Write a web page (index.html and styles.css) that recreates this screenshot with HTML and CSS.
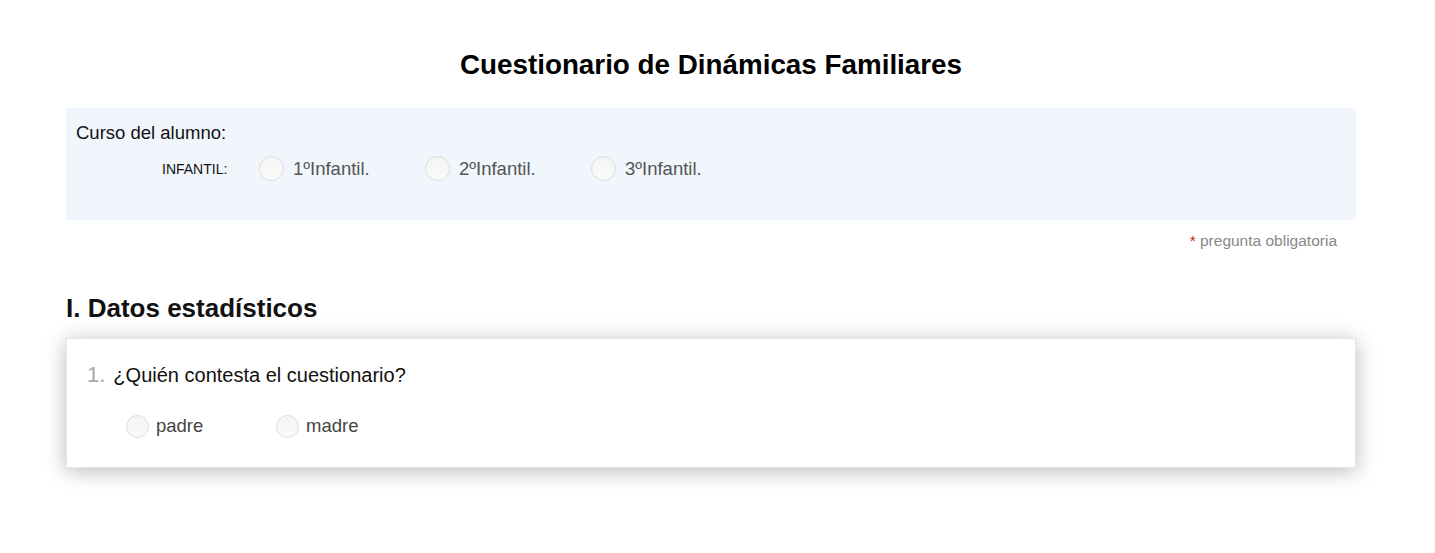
FILE: index.html
```html
<!DOCTYPE html>
<html lang="es">
<head>
<meta charset="utf-8">
<title>Cuestionario de Dinámicas Familiares</title>
<link rel="stylesheet" href="styles.css">
</head>
<body>
<div class="page">
  <h1 class="title">Cuestionario de Dinámicas Familiares</h1>
  <div class="course">
    <div class="course-label">Curso del alumno:</div>
    <div class="course-row">
      <span class="level">INFANTIL:</span>
      <label class="opt"><span class="radio"></span><span>1ºInfantil.</span></label>
      <label class="opt"><span class="radio"></span><span>2ºInfantil.</span></label>
      <label class="opt"><span class="radio"></span><span>3ºInfantil.</span></label>
    </div>
  </div>
  <div class="required"><span class="ast">*</span> pregunta obligatoria</div>
  <h2 class="section">I. Datos estadísticos</h2>
  <div class="card">
    <div class="question"><span class="num">1.</span><span class="qtext">¿Quién contesta el cuestionario?</span></div>
    <div class="answers">
      <label class="ans"><span class="radio small"></span><span>padre</span></label>
      <label class="ans"><span class="radio small"></span><span>madre</span></label>
    </div>
  </div>
</div>
</body>
</html>
```
FILE: styles.css
```css
* { box-sizing: border-box; }
body {
  margin: 0;
  background: #fff;
  font-family: "Liberation Sans", Arial, sans-serif;
  color: #111;
}
.page {
  width: 1290px;
  margin: 0 0 0 66px;
  padding: 49px 0 60px 0;
}
.title {
  margin: 0;
  text-align: center;
  font-size: 27.8px;
  font-weight: bold;
  line-height: 32px;
  color: #000;
}
.course {
  margin-top: 27px;
  height: 112px;
  background: #f1f6fd;
  padding: 14px 10px 0 10px;
}
.course-label {
  font-size: 18.5px;
  line-height: 22px;
  color: #111;
}
.course-row {
  display: flex;
  align-items: center;
  margin-top: 11px;
  height: 27px;
}
.level {
  font-size: 14px;
  margin-left: 86px;
  width: 97px;
  color: #111;
  padding-top: 1px;
}
.opt {
  display: flex;
  align-items: center;
  gap: 9px;
  width: 166px;
  font-size: 18.5px;
  color: #555;
}
.radio {
  display: inline-block;
  width: 25px;
  height: 25px;
  border-radius: 50%;
  border: 1px solid #dcdcdc;
  background: linear-gradient(#f4f4f4, #fafafa);
  flex: none;
}
.radio.small {
  width: 23px;
  height: 23px;
}
.required {
  text-align: right;
  padding-right: 19px;
  margin-top: 12px;
  font-size: 15.5px;
  line-height: 18px;
  color: #888;
}
.ast { color: #c0272d; }
.section {
  margin: 43px 0 0 0;
  font-size: 26px;
  line-height: 30px;
  font-weight: bold;
  color: #111;
}
.card {
  margin-top: 15px;
  height: 130px;
  background: #fff;
  border: 1px solid #e6e6e6;
  box-shadow: 0 3px 20px rgba(0,0,0,0.28);
  padding: 23px 20px 0 20px;
}
.question {
  display: flex;
  align-items: baseline;
  gap: 8px;
}
.num {
  font-size: 22px;
  line-height: 26px;
  color: #aaa;
}
.qtext {
  font-size: 20px;
  line-height: 26px;
  color: #111;
}
.answers {
  display: flex;
  align-items: center;
  height: 26px;
  margin-top: 25px;
  padding-left: 39px;
}
.ans {
  display: flex;
  align-items: center;
  gap: 7px;
  width: 150px;
  font-size: 18.5px;
  color: #444;
}
```
